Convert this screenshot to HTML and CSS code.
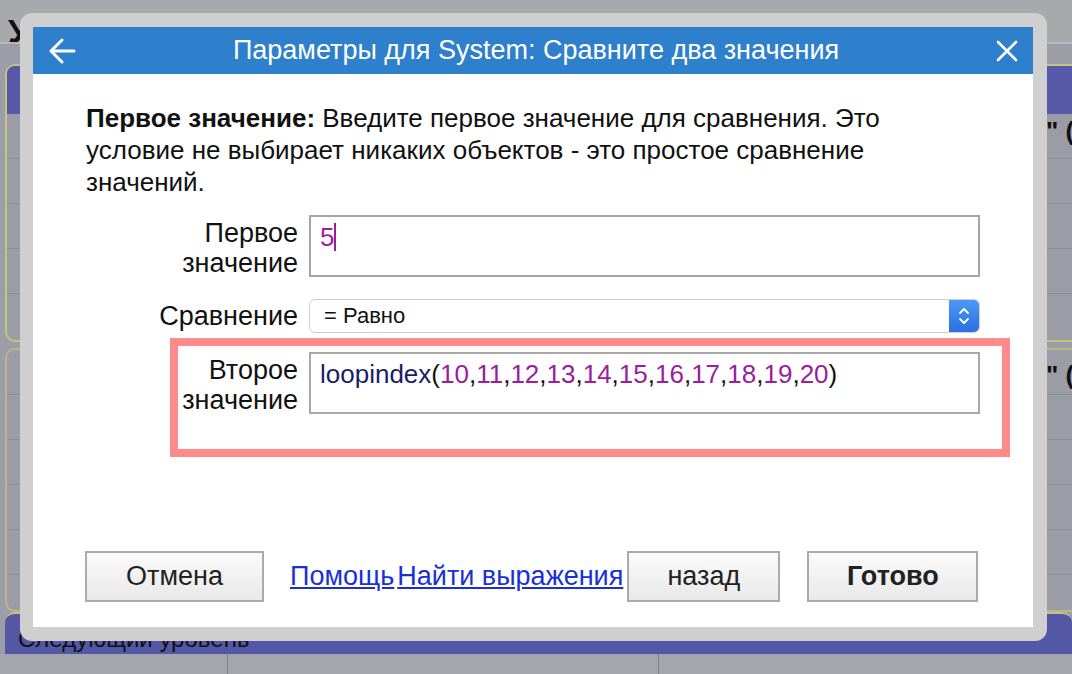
FILE: index.html
```html
<!DOCTYPE html>
<html>
<head>
  <title>Параметры для System</title>
  <link rel="stylesheet" href="styles.css">
</head>
<body>
  <div class="app">
    <div class="app-top">У</div>
    <div class="app-main">
      <div class="app-card first">
        <div class="card-head"></div>
        <div class="card-row"></div>
        <div class="card-row"></div>
        <div class="card-row"></div>
        <div class="card-row"></div>
      </div>
      <div class="app-card second">
        <div class="card-row"></div>
        <div class="card-row"></div>
        <div class="card-row"></div>
        <div class="card-row"></div>
        <div class="card-row"></div>
      </div>
      <div class="side-quote q1">" (</div>
      <div class="side-quote q2">" (</div>
    </div>
    <div class="app-next">Следующий уровень</div>
    <div class="app-bottom">
      <div class="bottom-cell"></div>
      <div class="bottom-cell wide"></div>
    </div>
  </div>

  <div class="dialog">
    <div class="dialog-inner">
      <div class="dialog-head">
        <svg class="head-icon" width="30" height="30" viewBox="0 0 30 30">
          <path d="M27 15H4M15 4L4 15l11 11" fill="none" stroke="#fff" stroke-width="3" stroke-linecap="round" stroke-linejoin="round"/>
        </svg>
        <div class="head-title">Параметры для System: Сравните два значения</div>
        <svg class="head-icon" width="24" height="24" viewBox="0 0 24 24">
          <path d="M3 3l18 18M21 3L3 21" fill="none" stroke="#fff" stroke-width="2.6" stroke-linecap="round"/>
        </svg>
      </div>

      <div class="dialog-body">
        <p class="desc"><b>Первое значение:</b> Введите первое значение для сравнения. Это условие не выбирает никаких объектов - это простое сравнение значений.</p>

        <div class="form-row">
          <label class="form-label">Первое значение</label>
          <div class="expr-box"><span class="num">5</span><span class="caret"></span></div>
        </div>

        <div class="form-row row-select">
          <label class="form-label">Сравнение</label>
          <div class="select-box">
            <span class="select-text">= Равно</span>
            <span class="stepper">
              <svg width="14" height="22" viewBox="0 0 14 22">
                <path d="M3 8l4-4 4 4M3 14l4 4 4-4" fill="none" stroke="#fff" stroke-width="1.8" stroke-linecap="round" stroke-linejoin="round"/>
              </svg>
            </span>
          </div>
        </div>

        <div class="form-row row-marked">
          <div class="highlight"></div>
          <label class="form-label">Второе значение</label>
          <div class="expr-box thin"><span class="fn">loopindex</span>(<span class="num">10</span>,<span class="num">11</span>,<span class="num">12</span>,<span class="num">13</span>,<span class="num">14</span>,<span class="num">15</span>,<span class="num">16</span>,<span class="num">17</span>,<span class="num">18</span>,<span class="num">19</span>,<span class="num">20</span>)</div>
        </div>

        <div class="button-row">
          <button class="dlg-button cancel">Отмена</button>
          <a href="#" class="dlg-link help">Помощь</a>
          <a href="#" class="dlg-link find">Найти выражения</a>
          <button class="dlg-button back">назад</button>
          <button class="dlg-button done">Готово</button>
        </div>
      </div>
    </div>
  </div>
</body>
</html>
```

FILE: styles.css
```css
html, body {
  margin: 0;
  padding: 0;
}

body {
  width: 1072px;
  height: 674px;
  overflow: hidden;
  background-color: #9b9ea6;
  font-family: "Liberation Sans", Arial, sans-serif;
  position: relative;
}

/* underlying page */
.app {
  display: flex;
  flex-direction: column;
  height: 674px;
}

.app-top {
  height: 42px;
  background-color: #a7a9ad;
  border-bottom: 2px solid #b6b8bb;
  font-size: 34px;
  font-weight: bold;
  padding-left: 8px;
  line-height: 62px;
  color: #111;
  overflow: hidden;
}

.app-main {
  flex: 1;
  position: relative;
  display: flex;
  flex-direction: column;
  gap: 6px;
  padding: 20px 0 0 5px;
}

.app-card {
  border: 2px solid #c9c27a;
  border-right: none;
  border-radius: 10px 0 0 10px;
  background-color: #9a9da6;
  overflow: hidden;
}

.app-card.first { height: 274px; }
.app-card.second { height: 260px; border-color: #b9b68a; }

.card-head {
  height: 48px;
  background-color: #5659a8;
}

.card-row {
  height: 44px;
  border-bottom: 1px solid #8c8f98;
}

.side-quote {
  position: absolute;
  left: 1046px;
  font-size: 26px;
  font-weight: bold;
  color: #111;
  white-space: nowrap;
}

.q1 { top: 72px; }
.q2 { top: 316px; }

.app-next {
  height: 40px;
  background-color: #5457a6;
  border-top: 2px solid #c9c27a;
  border-radius: 10px 10px 0 0;
  margin-left: 5px;
  font-size: 24px;
  line-height: 50px;
  padding-left: 13px;
  color: #111;
  overflow: hidden;
}

.app-bottom {
  height: 20px;
  display: flex;
  background-color: #a3a6ad;
}

.bottom-cell {
  width: 227px;
  border-right: 1px solid #7d8089;
}

.bottom-cell.wide {
  width: 430px;
}

/* dialog */
.dialog {
  position: absolute;
  left: 20px;
  top: 13px;
  width: 1027px;
  height: 628px;
  box-sizing: border-box;
  padding: 14px 14px 14px 13px;
  background-color: #cfcfcf;
  border-radius: 12px;
}

.dialog-inner {
  background-color: #fff;
  height: 100%;
  display: flex;
  flex-direction: column;
}

.dialog-head {
  height: 47px;
  background-color: #2f80cc;
  display: flex;
  align-items: center;
  padding: 0 14px 0 14px;
}

.head-title {
  flex: 1;
  text-align: center;
  color: #fff;
  font-size: 27px;
}

.head-icon {
  flex: none;
}

.dialog-body {
  padding: 28px 53px 0 53px;
}

.desc {
  margin: 0;
  font-size: 26px;
  line-height: 32px;
  color: #111;
}

.form-row {
  display: flex;
  gap: 11px;
  margin-top: 17px;
  position: relative;
}

.form-label {
  width: 212px;
  text-align: right;
  font-size: 27px;
  line-height: 30px;
  color: #111;
  padding-top: 3px;
}

.expr-box {
  width: 671px;
  height: 62px;
  box-sizing: border-box;
  border: 2px solid #a0a6ac;
  padding: 6px 9px;
  font-size: 26px;
  line-height: 28px;
  color: #111;
}

.expr-box.thin {
  border-color: #a8a8a8;
}

.num {
  color: #9a1d9c;
}

.fn {
  color: #1c1c66;
}

.caret {
  display: inline-block;
  width: 2px;
  height: 28px;
  background-color: #9a1d9c;
  vertical-align: -5px;
}

.row-select {
  margin-top: 21px;
  align-items: center;
}

.row-select .form-label {
  padding-top: 0;
}

.select-box {
  width: 671px;
  height: 34px;
  box-sizing: border-box;
  border: 1px solid #cfcfcf;
  border-radius: 6px;
  display: flex;
  align-items: center;
  overflow: hidden;
}

.select-text {
  flex: 1;
  font-size: 22px;
  padding-left: 14px;
  color: #111;
}

.stepper {
  width: 30px;
  height: 34px;
  background: linear-gradient(#4d9af5, #2a6fe0);
  display: flex;
  align-items: center;
  justify-content: center;
}

.row-marked {
  margin-top: 19px;
}

.highlight {
  position: absolute;
  left: 84px;
  top: -14px;
  right: -30px;
  bottom: -42px;
  border: 8px solid #ff8a8a;
}

.button-row {
  margin-top: 136px;
  display: flex;
  align-items: center;
  margin-left: -1px;
}

.dlg-button {
  height: 51px;
  box-sizing: border-box;
  border: 2px solid #ababab;
  background: linear-gradient(#fafafa, #e9e9e9);
  font-family: "Liberation Sans", Arial, sans-serif;
  font-size: 27px;
  color: #222;
  cursor: pointer;
}

.cancel { width: 179px; }
.back { width: 153px; margin-left: 4px; }
.done { width: 171px; margin-left: 27px; font-weight: bold; }

.dlg-link {
  font-size: 27px;
  color: #1a2fd6;
  text-decoration: underline;
}

.help { margin-left: 26px; }
.find { margin-left: 3px; }
```
